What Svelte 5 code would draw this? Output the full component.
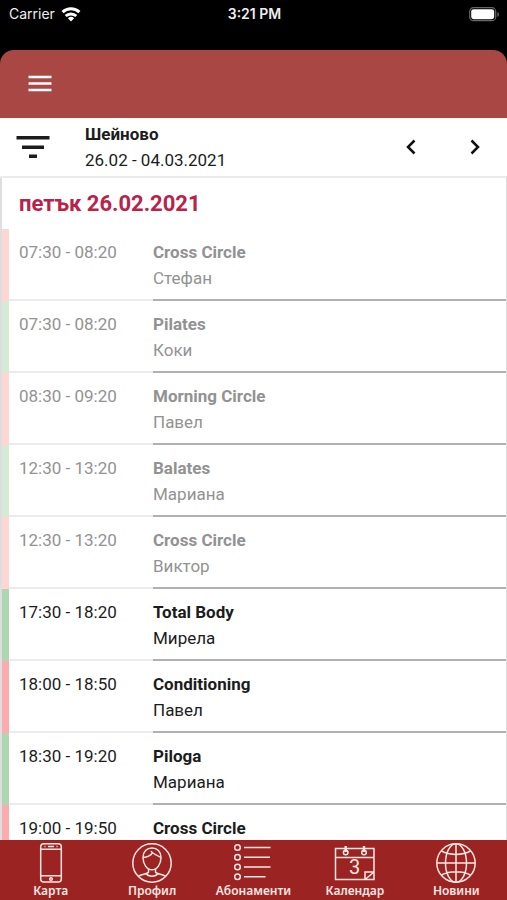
<script>
  const classes = [
    { time: '07:30 - 08:20', name: 'Cross Circle', coach: 'Стефан', tone: 'red', past: true },
    { time: '07:30 - 08:20', name: 'Pilates', coach: 'Коки', tone: 'green', past: true },
    { time: '08:30 - 09:20', name: 'Morning Circle', coach: 'Павел', tone: 'red', past: true },
    { time: '12:30 - 13:20', name: 'Balates', coach: 'Мариана', tone: 'green', past: true },
    { time: '12:30 - 13:20', name: 'Cross Circle', coach: 'Виктор', tone: 'red', past: true },
    { time: '17:30 - 18:20', name: 'Total Body', coach: 'Мирела', tone: 'green', past: false },
    { time: '18:00 - 18:50', name: 'Conditioning', coach: 'Павел', tone: 'red', past: false },
    { time: '18:30 - 19:20', name: 'Piloga', coach: 'Мариана', tone: 'green', past: false },
    { time: '19:00 - 19:50', name: 'Cross Circle', coach: '', tone: 'red', past: false },
  ];
  const tabs = [
    { id: 'card', label: 'Карта' },
    { id: 'profile', label: 'Профил' },
    { id: 'plans', label: 'Абонаменти' },
    { id: 'calendar', label: 'Календар' },
    { id: 'news', label: 'Новини' },
  ];
</script>

<div class="app">
  <div class="status">
    <div class="carrier">
      <span>Carrier</span>
      <svg width="20" height="15" viewBox="0 0 20 15" fill="none" stroke="#fff" stroke-width="3" aria-hidden="true">
        <path d="M1.6 5.2a12.2 12.2 0 0 1 16.800 0M4.700 9a7.700 7.700 0 0 1 10.600 0" />
        <path d="M10 14.500 6.900 11.300a4.500 4.500 0 0 1 6.200 0z" fill="#fff" stroke="none" />
      </svg>
    </div>
    <strong>3:21 PM</strong>
    <svg class="battery" width="31" height="15" viewBox="0 0 31 15" aria-hidden="true">
      <rect x=".7" y=".7" width="26" height="13" rx="3.8" fill="none" stroke="#66666a" stroke-width="1.2" />
      <rect x="2.2" y="2.2" width="23" height="10" rx="2.4" fill="#fff" />
      <path d="M28.3 5v5c2.2-1 2.2-4 0-5z" fill="#66666a" />
    </svg>
  </div>

  <header>
    <button aria-label="Меню">
      <svg width="24" height="18" viewBox="0 0 24 18" aria-hidden="true">
        <path d="M.5 2h23M.5 8.500h23M.5 15h23" stroke="#fff" stroke-width="2.5" />
      </svg>
    </button>
  </header>

  <div class="toolbar">
    <button aria-label="Филтър">
      <svg width="34" height="24" viewBox="0 0 34 24" aria-hidden="true">
        <path d="M.5 2.8h33M6 12.2h22M13 21.3h8" stroke="#1c1c1c" stroke-width="3.6" />
      </svg>
    </button>
    <div class="range">
      <strong>Шейново</strong>
      <span>26.02 - 04.03.2021</span>
    </div>
    <button class="step" aria-label="Назад">
      <svg width="10" height="16" viewBox="0 0 10 16" fill="none" stroke="#111" stroke-width="2.5" aria-hidden="true"><path d="M8.5 1.5 2 8l6.5 6.5" /></svg>
    </button>
    <button class="step" aria-label="Напред">
      <svg width="10" height="16" viewBox="0 0 10 16" fill="none" stroke="#111" stroke-width="2.5" aria-hidden="true"><path d="M1.5 1.5 8 8l-6.5 6.5" /></svg>
    </button>
  </div>

  <main>
    <h1>петък 26.02.2021</h1>
    <ul>
      {#each classes as item}
        <li class={item.tone} class:past={item.past}>
          <time>{item.time}</time>
          <div class="info">
            <strong>{item.name}</strong>
            <span>{item.coach}</span>
          </div>
        </li>
      {/each}
    </ul>
  </main>

  <nav>
    {#each tabs as tab}
      <a href={'#' + tab.id}>
        <svg width="42" height="42" viewBox="0 0 42 42" fill="none" stroke="#fbe6e2" stroke-width="1.5" aria-hidden="true">
          {#if tab.id === 'card'}
            <rect x="10.7" y="1.7" width="20.6" height="38.3" rx="3" />
            <path d="M11 7.3h20M11 33.8h20M18 4.500h6M14.500 4.500h1M26.500 4.500h1" />
            <circle cx="21" cy="37" r="1.3" />
          {:else if tab.id === 'profile'}
            <circle cx="21" cy="21" r="19.2" />
            <path d="M12 15.5c0-6 3.800-9.500 9-9.500s9 3.500 9 9.500c0 6.500-3.800 12.300-9 12.300s-9-5.800-9-12.300z" />
            <path d="M12.300 15.500c4-.3 7-1.700 9-4.500M20 9c1.500 3.300 5.500 3.400 9.700 6.500M17.500 27v3.200c-1 2-7.500 2-10 4M24.500 27v3.200c1 2 7.500 2 10 4M15 31.500c2.500 3.500 9.500 3.500 12 0" />
          {:else if tab.id === 'plans'}
            <circle cx="5.500" cy="5.500" r="2.800" />
            <circle cx="5.500" cy="15.200" r="2.800" />
            <circle cx="5.500" cy="25" r="2.800" />
            <circle cx="5.500" cy="34.800" r="2.800" />
            <path d="M12 5.500h26.500M12 15.200h26M12 25h26.500M12 34.800h21.500" />
          {:else if tab.id === 'calendar'}
            <path d="M1.500 6.500h38.500v31h-38.500zM1.500 15.500h38.500M31 37.500v-7.500h9M31 37.500l9-7.500" />
            <circle cx="11.700" cy="10.500" r="2.300" />
            <circle cx="30" cy="10.500" r="2.300" />
            <path d="M11.700 4v6M30 4v6" stroke-width="2.400" />
            <text x="20.500" y="32" text-anchor="middle">3</text>
          {:else}
            <circle cx="21" cy="21" r="19.200" />
            <ellipse cx="21" cy="21" rx="10.500" ry="19.200" />
            <path d="M21 2v38M2 21h38M6.500 9c8 4.500 21 4.500 29 0M6.500 33c8-4.500 21-4.500 29 0" />
          {/if}
        </svg>
        <span>{tab.label}</span>
      </a>
    {/each}
  </nav>
</div>

<style>
  :global(body) {
    margin: 0;
    background: #000;
  }
  .app {
    display: flex;
    flex-direction: column;
    height: 100vh;
    overflow: hidden;
    background: #000;
    color: #1c1c1c;
    font: 17px/26px Roboto, sans-serif;
  }
  button {
    display: flex;
    align-items: center;
    padding: 0;
    border: 0;
    background: none;
  }
  svg {
    display: block;
  }
  .status {
    display: grid;
    grid-template-columns: 1fr auto 1fr;
    align-items: center;
    flex: none;
    height: 28px;
    margin-bottom: 22px;
    padding: 0 7px 0 9px;
    color: #eee;
    font: 14px/28px Inter, sans-serif;
  }
  .status strong {
    font-weight: 600;
  }
  .carrier {
    display: flex;
    align-items: center;
    gap: 6px;
  }
  .battery {
    justify-self: end;
  }
  header {
    display: flex;
    flex: none;
    height: 68px;
    padding: 0 28px;
    border-radius: 14px 14px 0 0;
    background: #a94744;
  }
  .toolbar {
    display: flex;
    align-items: center;
    flex: none;
    height: 58px;
    padding: 0 10px 0 16px;
    border-bottom: 2px solid #ebebeb;
    background: #fff;
  }
  .range {
    display: flex;
    flex: 1;
    flex-direction: column;
    margin-left: 35px;
  }
  .step {
    justify-content: center;
    width: 44px;
    height: 44px;
    margin-left: 20px;
  }
  main {
    flex: 1;
    min-height: 0;
    overflow: hidden;
    border: solid #dedede;
    border-width: 0 1px 0 2px;
    background: #fff;
  }
  h1 {
    margin: 0;
    padding: 0 17px;
    color: #b9234a;
    font-size: 22px;
    font-weight: 700;
    line-height: 51px;
  }
  ul {
    margin: 0;
    padding: 0;
    list-style: none;
  }
  li {
    display: grid;
    grid-template-columns: 134px 1fr;
    box-sizing: border-box;
    height: 72px;
    padding-left: 10px;
    border-left: 7px solid;
  }
  .red {
    border-color: #ffabae;
  }
  .green {
    border-color: #aed6b0;
  }
  .past {
    color: #929292;
  }
  .past.red {
    border-color: #ffd5d6;
  }
  .past.green {
    border-color: #d6ebd7;
  }
  time,
  .info {
    padding-top: 10px;
    border-bottom: 2px solid #b0b0b0;
  }
  time {
    margin-left: -10px;
    padding-left: 10px;
    border-color: #ebebeb;
  }
  .info {
    display: flex;
    flex-direction: column;
  }
  nav {
    display: grid;
    grid-template-columns: repeat(5, 1fr);
    flex: none;
    height: 60px;
    background: #9b2423;
  }
  nav a {
    display: flex;
    flex-direction: column;
    align-items: center;
    padding-top: 2px;
    color: #fbe6e2;
    font: 600 12px/14px "Noto Sans", sans-serif;
    text-decoration: none;
  }
  nav text {
    fill: #fbe6e2;
    stroke: none;
    font: 20px Roboto, sans-serif;
  }
</style>
